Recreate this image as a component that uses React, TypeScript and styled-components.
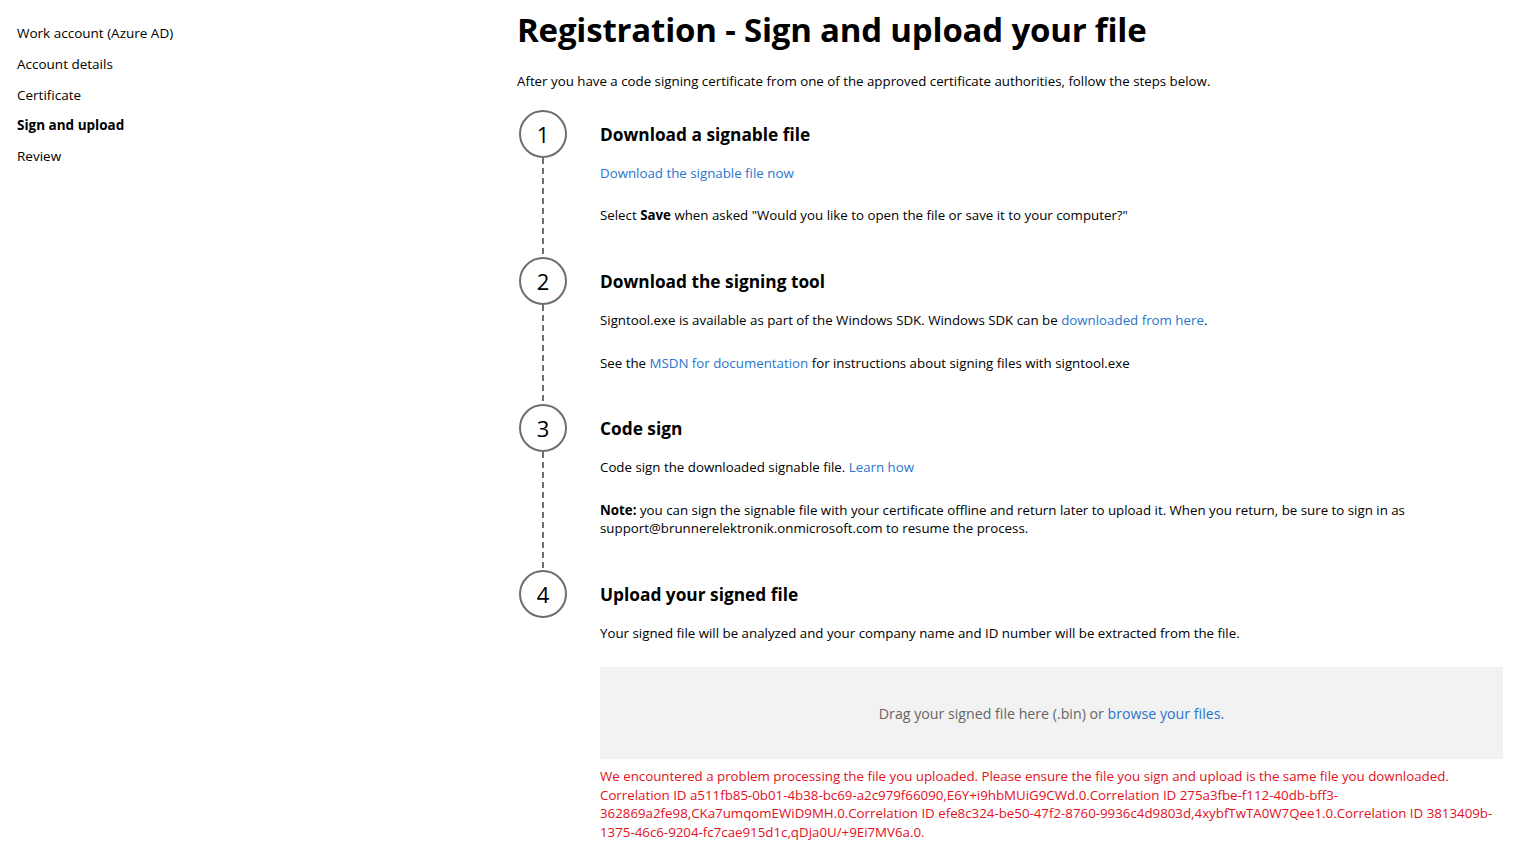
import React from "react";
import styled, { createGlobalStyle } from "styled-components";

const Global = createGlobalStyle`
  html, body { margin: 0; padding: 0; background: #fff; }
  body { font-family: "Open Sans", "Noto Sans", Arial, sans-serif; color: #000; }
  * { box-sizing: border-box; }
`;

const Page = styled.div`
  display: grid;
  grid-template-columns: 517px 1fr;
  width: 1515px;
  min-height: 851px;
`;

const Sidebar = styled.nav`
  display: flex;
  flex-direction: column;
  padding: 24px 0 0 17px;
`;

const NavItem = styled.a<{ $active?: boolean }>`
  display: block;
  font-size: 13.5px;
  line-height: 18px;
  margin-bottom: 12.75px;
  color: #000;
  text-decoration: none;
  font-weight: ${(p) => (p.$active ? 700 : 400)};
`;

const Main = styled.main`
  padding: 6px 12px 0 0;
`;

const Title = styled.h1`
  margin: 0;
  font-size: 33px;
  line-height: 48px;
  font-weight: 700;
  letter-spacing: -0.2px;
`;

const Intro = styled.p`
  margin: 18px 0 20px;
  font-size: 13.3px;
  line-height: 18px;
`;

const Step = styled.section`
  display: grid;
  grid-template-columns: 52px 1fr;
  column-gap: 31px;
`;

const Marker = styled.div`
  display: flex;
  flex-direction: column;
  align-items: center;
`;

const Circle = styled.div`
  width: 48px;
  height: 48px;
  flex: none;
  border: 2px solid #6e6e6e;
  border-radius: 50%;
  display: flex;
  align-items: center;
  justify-content: center;
  font-size: 22px;
  font-weight: 400;
  color: #000;
`;

const Dash = styled.div`
  flex: 1;
  width: 2px;
  background: repeating-linear-gradient(to bottom, #6e6e6e 0 6px, transparent 6px 10px);
`;

const Body = styled.div<{ $pad?: number }>`
  padding-bottom: ${(p) => p.$pad ?? 33}px;
`;

const StepTitle = styled.h2`
  margin: 0;
  height: 48px;
  display: flex;
  align-items: center;
  font-size: 17.3px;
  font-weight: 700;
`;

const Text = styled.p<{ $gap?: number }>`
  margin: ${(p) => p.$gap ?? 24}px 0 0;
  font-size: 13.3px;
  line-height: 18px;
  &:first-of-type { margin-top: 6px; }
`;

const Link = styled.a`
  color: #2a75cc;
  text-decoration: none;
`;

const DropZone = styled.div`
  margin-top: 25px;
  height: 92px;
  background: #f2f2f2;
  display: flex;
  align-items: center;
  justify-content: center;
  font-size: 14.2px;
  color: #666;
`;

const ErrorText = styled.p`
  margin: 8px 0 0;
  font-size: 13.3px;
  line-height: 18.7px;
  color: #e3101e;
`;

const steps = [
  {
    n: 1,
    pad: 33,
    title: "Download a signable file",
    body: (
      <>
        <Text>
          <Link href="#">Download the signable file now</Link>
        </Text>
        <Text>
          Select <b>Save</b> when asked "Would you like to open the file or save it to your computer?"
        </Text>
      </>
    ),
  },
  {
    n: 2,
    pad: 32,
    title: "Download the signing tool",
    body: (
      <>
        <Text>
          Signtool.exe is available as part of the Windows SDK. Windows SDK can be{" "}
          <Link href="#">downloaded from here</Link>.
        </Text>
        <Text $gap={25}>
          See the <Link href="#">MSDN for documentation</Link> for instructions about signing files with signtool.exe
        </Text>
      </>
    ),
  },
  {
    n: 3,
    pad: 33,
    title: "Code sign",
    body: (
      <>
        <Text>
          Code sign the downloaded signable file. <Link href="#">Learn how</Link>
        </Text>
        <Text $gap={25}>
          <b>Note:</b> you can sign the signable file with your certificate offline and return later to upload it.
          When you return, be sure to sign in as support@brunnerelektronik.onmicrosoft.com to resume the process.
        </Text>
      </>
    ),
  },
];

export default function App() {
  return (
    <>
      <Global />
      <Page>
        <Sidebar>
          <NavItem href="#">Work account (Azure AD)</NavItem>
          <NavItem href="#">Account details</NavItem>
          <NavItem href="#">Certificate</NavItem>
          <NavItem href="#" $active>Sign and upload</NavItem>
          <NavItem href="#">Review</NavItem>
        </Sidebar>
        <Main>
          <Title>Registration - Sign and upload your file</Title>
          <Intro>
            After you have a code signing certificate from one of the approved certificate authorities, follow the steps below.
          </Intro>
          {steps.map((s) => (
            <Step key={s.n}>
              <Marker>
                <Circle>{s.n}</Circle>
                <Dash />
              </Marker>
              <Body $pad={s.pad}>
                <StepTitle>{s.title}</StepTitle>
                {s.body}
              </Body>
            </Step>
          ))}
          <Step>
            <Marker>
              <Circle>4</Circle>
            </Marker>
            <Body $pad={0}>
              <StepTitle>Upload your signed file</StepTitle>
              <Text>
                Your signed file will be analyzed and your company name and ID number will be extracted from the file.
              </Text>
              <DropZone>
                Drag your signed file here (.bin) or&nbsp;<Link href="#">browse your files.</Link>
              </DropZone>
              <ErrorText>
                We encountered a problem processing the file you uploaded. Please ensure the file you sign and upload is the same file you downloaded.
                <br />
                Correlation ID a511fb85-0b01-4b38-bc69-a2c979f66090,E6Y+i9hbMUiG9CWd.0.Correlation ID 275a3fbe-f112-40db-bff3-
                <br />
                362869a2fe98,CKa7umqomEWiD9MH.0.Correlation ID efe8c324-be50-47f2-8760-9936c4d9803d,4xybfTwTA0W7Qee1.0.Correlation ID 3813409b-
                <br />
                1375-46c6-9204-fc7cae915d1c,qDja0U/+9Ei7MV6a.0.
              </ErrorText>
            </Body>
          </Step>
        </Main>
      </Page>
    </>
  );
}
